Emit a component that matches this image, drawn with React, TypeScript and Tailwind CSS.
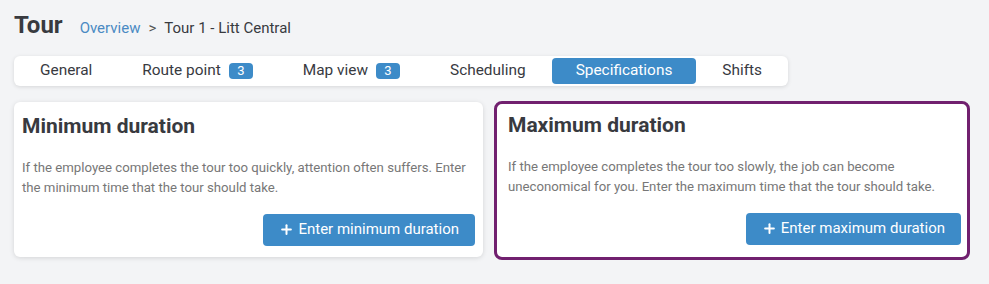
import { Plus } from 'lucide-react';

const tabs = [
  { label: 'General' },
  { label: 'Route point', badge: 3 },
  { label: 'Map view', badge: 3 },
  { label: 'Scheduling' },
  { label: 'Specifications', active: true },
  { label: 'Shifts' },
];

function DurationButton({ label }: { label: string }) {
  return (
    <button className="flex h-8 items-center gap-[4px] rounded-[4px] bg-[#3d8bc8] px-4 text-[15px] text-white">
      <Plus size={15} strokeWidth={3.2} />
      {label}
    </button>
  );
}

export default function App() {
  return (
    <div
      className="min-h-[284px] bg-[#f3f4f6] px-[14px] pt-[11px] text-[#333]"
      style={{ fontFamily: "Roboto, 'Noto Sans', sans-serif" }}
    >
      {/* Header */}
      <div className="flex items-baseline">
        <h1 className="text-[24px] leading-7 font-bold text-[#383a3f]">Tour</h1>
        <div className="ml-[17px] flex items-baseline text-[15px]">
          <span className="text-[#4a8ac3]">Overview</span>
          <span className="mx-2 text-[#555]">&gt;</span>
          <span className="text-[#383a3f]">Tour 1 - Litt Central</span>
        </div>
      </div>

      {/* Tabs */}
      <div className="mt-4 flex w-[774px] gap-0.5 rounded-md bg-white p-0.5 shadow-[0_1px_4px_rgba(0,0,0,0.12)]">
        {tabs.map((t) => (
          <div
            key={t.label}
            className={
              t.active
                ? 'flex h-[26px] items-center rounded-[4px] bg-[#3d8bc8] px-6 text-[15.4px] text-white'
                : 'flex h-[26px] items-center px-6 text-[15.4px] text-[#383a3f]'
            }
          >
            {t.label}
            {t.badge && (
              <span className="ml-2 flex h-4 w-6 items-center justify-center rounded-[4px] bg-[#3d8bc8] text-[13px] text-white">
                {t.badge}
              </span>
            )}
          </div>
        ))}
      </div>

      {/* Cards */}
      <div className="mt-[15px] flex items-start gap-[11px]">
        <div className="mt-px flex w-[469px] flex-col rounded-md bg-white pt-[10px] pr-2 pb-[11px] pl-2 shadow-[0_1px_5px_rgba(0,0,0,0.13)]">
          <h2 className="text-[21px] leading-7 font-bold text-[#383a3f]">Minimum duration</h2>
          <p className="mt-[18px] text-[13.2px] leading-5 text-[#777]">
            If the employee completes the tour too quickly, attention often suffers. Enter the minimum time that the
            tour should take.
          </p>
          <div className="mt-4 flex justify-end">
            <DurationButton label="Enter minimum duration" />
          </div>
        </div>

        <div className="flex w-[476px] flex-col rounded-lg border-[3px] border-[#71206f] bg-white pt-[7px] pr-[6px] pb-[12px] pl-[11px]">
          <h2 className="text-[21px] leading-7 font-bold text-[#383a3f]">Maximum duration</h2>
          <p className="mt-[18px] text-[13.2px] leading-5 text-[#777]">
            If the employee completes the tour too slowly, the job can become uneconomical for you. Enter the maximum
            time that the tour should take.
          </p>
          <div className="mt-4 flex justify-end">
            <DurationButton label="Enter maximum duration" />
          </div>
        </div>
      </div>
    </div>
  );
}
